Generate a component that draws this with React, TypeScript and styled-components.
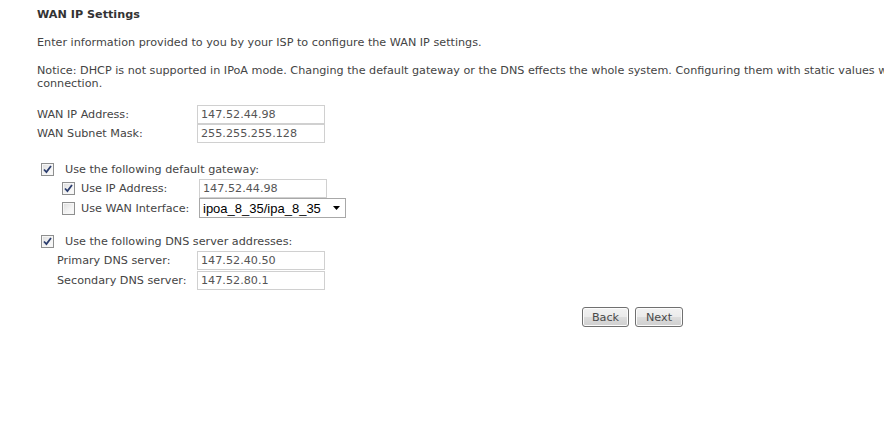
import styled, { createGlobalStyle } from "styled-components";

const UI_FONT = `"DejaVu Sans", Verdana, sans-serif`;

const GlobalStyle = createGlobalStyle`
  html, body {
    margin: 0;
    padding: 0;
    background: #fff;
    overflow: hidden;
  }
  body {
    font-family: ${UI_FONT};
    font-size: 11.2px;
    color: #444;
  }
`;

const Page = styled.div`
  width: 1200px;
  padding: 8px 0 0 37px;
  box-sizing: border-box;
`;

const Title = styled.h2`
  margin: 0;
  font-size: 11.2px;
  line-height: 14px;
  font-weight: bold;
  color: #333;
`;

const Para = styled.p<{ $lh?: number; $nowrap?: boolean }>`
  margin: 14px 0 0;
  line-height: ${({ $lh }) => $lh ?? 14}px;
  white-space: ${({ $nowrap }) => ($nowrap ? "nowrap" : "normal")};
`;

const FieldGrid = styled.div`
  margin-top: 15px;
  display: grid;
  grid-template-columns: 160px 128px;
  grid-auto-rows: 19px;
  align-items: center;
`;

const Block = styled.div<{ $top: number }>`
  margin-top: ${({ $top }) => $top}px;
  display: flex;
  flex-direction: column;
`;

const CheckRow = styled.label<{ $indent: number; $gap: number; $h: number }>`
  display: flex;
  align-items: center;
  height: ${({ $h }) => $h}px;
  padding-left: ${({ $indent }) => $indent}px;
  gap: ${({ $gap }) => $gap}px;
`;

const SubRow = styled.div<{ $indent: number }>`
  display: flex;
  align-items: center;
  height: 20px;
  padding-left: ${({ $indent }) => $indent}px;
`;

const Label = styled.span<{ $w?: number; $ml?: number }>`
  display: inline-block;
  width: ${({ $w }) => ($w ? `${$w}px` : "auto")};
  margin-left: ${({ $ml }) => $ml ?? 0}px;
  white-space: nowrap;
`;

const Box = styled.span<{ $checked: boolean }>`
  flex: none;
  width: 11px;
  height: 11px;
  border: 1px solid #8e8f8f;
  background: linear-gradient(135deg, #dcdcdc 0%, #f4f4f4 60%, #fbfbfb 100%);
  box-shadow: inset 0 0 0 1px #f6f6f6;
  display: flex;
  align-items: center;
  justify-content: center;
  svg {
    display: ${({ $checked }) => ($checked ? "block" : "none")};
  }
`;

const TextInput = styled.input`
  box-sizing: border-box;
  width: 128px;
  height: 19px;
  margin: 0;
  padding: 0 0 0 3px;
  border: 1px solid #d0d0d0;
  font-family: ${UI_FONT};
  font-size: 11.2px;
  color: #555;
  outline: none;
  background: #fff;
`;

const SelectWrap = styled.div`
  position: relative;
  width: 147px;
  height: 20px;
`;

const Select = styled.select`
  appearance: none;
  box-sizing: border-box;
  width: 100%;
  height: 100%;
  margin: 0;
  padding: 0 0 0 3px;
  border: 1px solid #a8a8a8;
  background: #fff;
  font-family: "Liberation Sans", Arial, sans-serif;
  font-size: 13px;
  color: #000;
  outline: none;
`;

const Arrow = styled.svg`
  position: absolute;
  right: 6px;
  top: 8px;
  pointer-events: none;
`;

const Buttons = styled.div`
  margin-top: 17px;
  padding-left: 545px;
  display: flex;
  gap: 6px;
`;

const Button = styled.button<{ $w: number }>`
  box-sizing: border-box;
  width: ${({ $w }) => $w}px;
  height: 20px;
  padding: 0;
  border: 1px solid #707070;
  border-radius: 3px;
  background: linear-gradient(#f2f2f2 0%, #ebebeb 50%, #dddddd 51%, #cfcfcf 100%);
  box-shadow: inset 0 0 0 1px #fcfcfc;
  font-family: ${UI_FONT};
  font-size: 11.2px;
  color: #4a4a4a;
`;

const Checkbox = ({ checked }: { checked: boolean }) => (
  <Box $checked={checked}>
    <svg width="9" height="9" viewBox="0 0 9 9">
      <path d="M1 4.5 L3.4 7 L8 1" fill="none" stroke="#2b3d6e" strokeWidth="1.8" />
    </svg>
  </Box>
);

export default function App() {
  return (
    <>
      <GlobalStyle />
      <Page>
        <Title>WAN IP Settings</Title>
        <Para>Enter information provided to you by your ISP to configure the WAN IP settings.</Para>
        <Para $lh={13} $nowrap>
          Notice: DHCP is not supported in IPoA mode. Changing the default gateway or the DNS effects the whole
          system. Configuring them with static values will disable the automatic assignment from DHCP or other WAN
          <br />
          connection.
        </Para>

        <FieldGrid>
          <Label>WAN IP Address:</Label>
          <TextInput defaultValue="147.52.44.98" />
          <Label>WAN Subnet Mask:</Label>
          <TextInput defaultValue="255.255.255.128" />
        </FieldGrid>

        <Block $top={17}>
          <CheckRow $indent={4} $gap={11} $h={18}>
            <Checkbox checked />
            <span>Use the following default gateway:</span>
          </CheckRow>
          <SubRow $indent={25}>
            <Checkbox checked />
            <Label $w={118} $ml={6}>Use IP Address:</Label>
            <TextInput defaultValue="147.52.44.98" />
          </SubRow>
          <SubRow $indent={25}>
            <Checkbox checked={false} />
            <Label $w={118} $ml={6}>Use WAN Interface:</Label>
            <SelectWrap>
              <Select defaultValue="ipoa_8_35/ipa_8_35">
                <option>ipoa_8_35/ipa_8_35</option>
              </Select>
              <Arrow width="7" height="4" viewBox="0 0 7 4">
                <path d="M0 0 H7 L3.5 4 Z" fill="#000" />
              </Arrow>
            </SelectWrap>
          </SubRow>
        </Block>

        <Block $top={14}>
          <CheckRow $indent={4} $gap={11} $h={18}>
            <Checkbox checked />
            <span>Use the following DNS server addresses:</span>
          </CheckRow>
          <SubRow $indent={20}>
            <Label $w={140}>Primary DNS server:</Label>
            <TextInput defaultValue="147.52.40.50" />
          </SubRow>
          <SubRow $indent={20}>
            <Label $w={140}>Secondary DNS server:</Label>
            <TextInput defaultValue="147.52.80.1" />
          </SubRow>
        </Block>

        <Buttons>
          <Button $w={47}>Back</Button>
          <Button $w={48}>Next</Button>
        </Buttons>
      </Page>
    </>
  );
}
